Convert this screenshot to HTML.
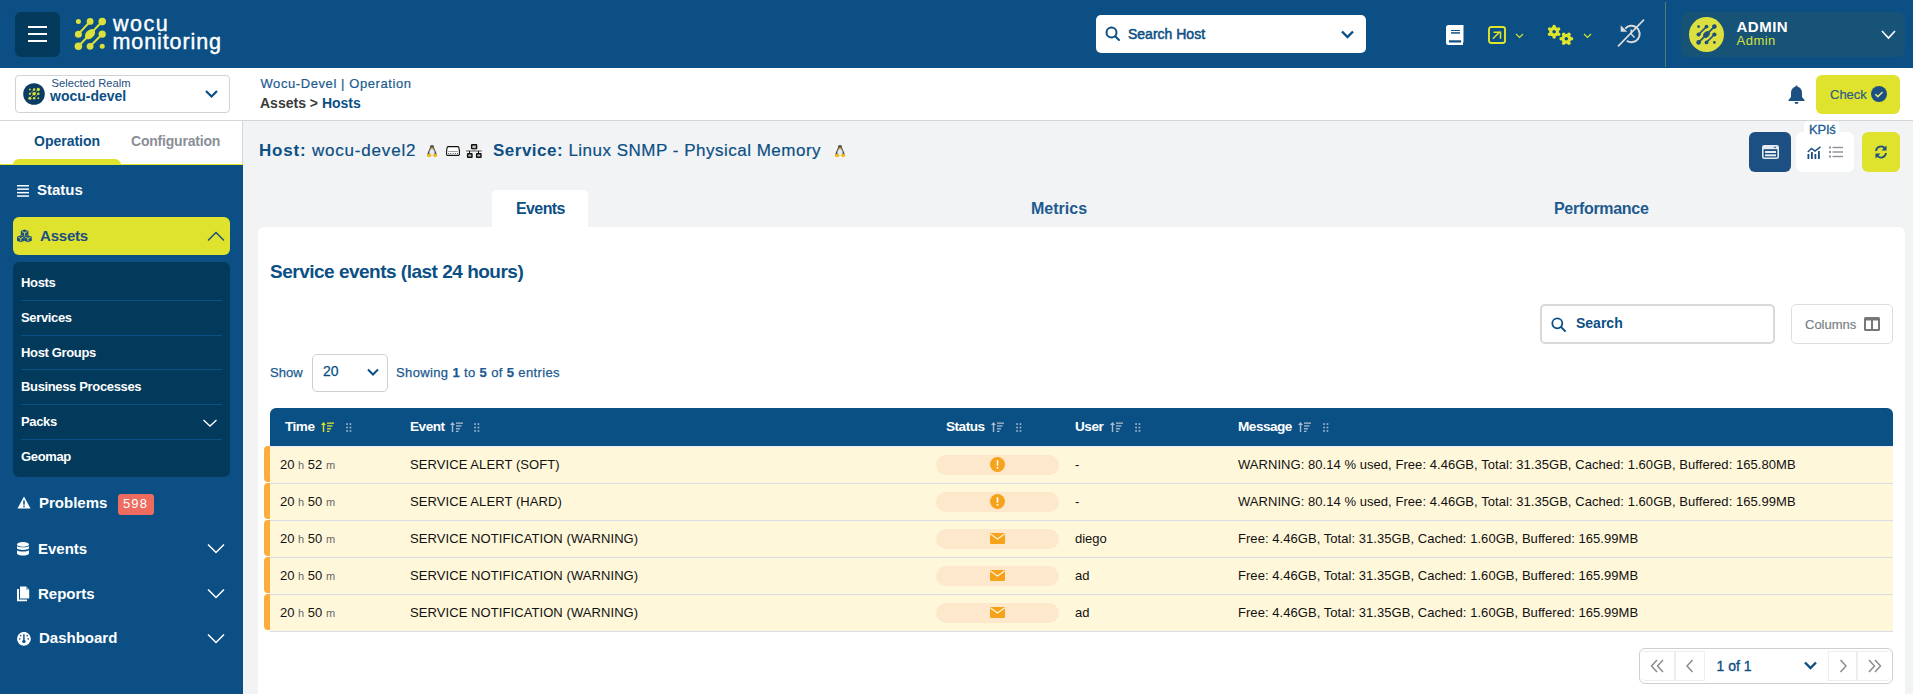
<!DOCTYPE html>
<html><head><meta charset="utf-8">
<style>
*{box-sizing:border-box;margin:0;padding:0}
html,body{width:1913px;height:694px;overflow:hidden;background:#f2f3f5;font-family:"Liberation Sans",sans-serif}
.a{position:absolute}
.t{position:absolute;white-space:nowrap;line-height:1}
.b{font-weight:bold}
svg{display:block}
</style></head><body>

<!-- HEADER -->
<div class="a" style="left:0;top:0;width:1913px;height:68px;background:#0b4f85"></div>
<div class="a" style="left:15px;top:12px;width:45px;height:45px;background:#033a5c;border-radius:6px"></div>
<div class="a" style="left:28px;top:26px;width:19px;height:2px;background:#fff"></div>
<div class="a" style="left:28px;top:33px;width:19px;height:2px;background:#fff"></div>
<div class="a" style="left:28px;top:40px;width:19px;height:2px;background:#fff"></div>
<svg class="a" style="left:0;top:0" width="120" height="68" viewBox="0 0 120 68">
 <g stroke="#dbe03a" stroke-width="2" fill="none" stroke-linecap="round">
  <line x1="90" y1="21.5" x2="78.4" y2="34.2"/>
  <line x1="102.2" y1="21.5" x2="78.4" y2="46.3"/>
  <line x1="102.2" y1="34.2" x2="90" y2="46.3"/>
 </g>
 <g fill="#dbe03a">
  <circle cx="78.4" cy="21.6" r="2.5"/>
  <circle cx="90.1" cy="21.4" r="3.4"/>
  <circle cx="102.2" cy="21.6" r="3.8"/>
  <circle cx="78.4" cy="34.2" r="3.5"/>
  <ellipse cx="90" cy="34.2" rx="6" ry="4" transform="rotate(-45 90 34.2)"/>
  <circle cx="102.2" cy="34.2" r="3.6"/>
  <circle cx="78.4" cy="46.3" r="3.8"/>
  <circle cx="90.1" cy="46.3" r="3.4"/>
  <circle cx="102.2" cy="46.3" r="2.5"/>
 </g>
</svg>
<div class="t" style="left:113px;top:13.8px;font-size:21.5px;color:#fff;letter-spacing:1.5px;-webkit-text-stroke:0.4px #fff">wocu</div>
<div class="t" style="left:112.5px;top:31.8px;font-size:21.5px;color:#fff;letter-spacing:0.9px;-webkit-text-stroke:0.4px #fff">monitoring</div>

<!-- search host -->
<div class="a" style="left:1096px;top:15px;width:270px;height:38px;background:#fff;border-radius:5px"></div>
<svg class="a" style="left:1105px;top:26px" width="16" height="16" viewBox="0 0 16 16"><circle cx="6.5" cy="6.5" r="5" stroke="#0b4f85" stroke-width="2" fill="none"/><line x1="10.2" y1="10.2" x2="14" y2="14" stroke="#0b4f85" stroke-width="2" stroke-linecap="round"/></svg>
<div class="t" style="left:1128px;top:26.5px;font-size:14px;color:#0b4f85;-webkit-text-stroke:0.5px #0b4f85">Search Host</div>
<svg class="a" style="left:1340px;top:29px" width="15" height="11" viewBox="0 0 15 11"><polyline points="2,2.5 7.5,8 13,2.5" stroke="#0b4f85" stroke-width="2.4" fill="none"/></svg>

<!-- header icons -->
<svg class="a" style="left:1446px;top:25px" width="18" height="20" viewBox="0 0 18 20"><path d="M2.5,0 H17.5 V20 H2.5 A2.5,2.5 0 0 1 0,17.5 V2.5 A2.5,2.5 0 0 1 2.5,0 Z" fill="#fff"/><rect x="5" y="5" width="9" height="1" fill="#0b4f85"/><rect x="5" y="7" width="9" height="1.8" fill="#3d6f9a"/><rect x="3" y="15.3" width="12" height="2.2" fill="#0b4f85"/><rect x="17" y="17.5" width="1" height="2.5" fill="#0b4f85"/></svg>
<svg class="a" style="left:1488px;top:26px" width="18" height="18" viewBox="0 0 18 18"><rect x="1" y="1" width="16" height="16" rx="2.2" stroke="#dfe62a" stroke-width="1.9" fill="none"/><path d="M4.8,12.8 L12.2,5.5 M5.5,6.2 H12.5 V12.8" stroke="#dfe62a" stroke-width="1.5" fill="none"/></svg>
<svg class="a" style="left:1515px;top:33px" width="9" height="6" viewBox="0 0 9 6"><polyline points="1,1 4.5,4.5 8,1" stroke="#dfe62a" stroke-width="1.1" fill="none"/></svg>
<svg class="a" style="left:1546px;top:23px" width="30" height="25" viewBox="0 0 30 25" fill="#dfe62a"><circle cx="8.1" cy="8.7" r="4.9"/><circle cx="8.10" cy="3.50" r="1.75"/><circle cx="12.60" cy="6.10" r="1.75"/><circle cx="12.60" cy="11.30" r="1.75"/><circle cx="8.10" cy="13.90" r="1.75"/><circle cx="3.60" cy="11.30" r="1.75"/><circle cx="3.60" cy="6.10" r="1.75"/><circle cx="8.1" cy="8.7" r="1.8" fill="#0b4f85"/><circle cx="20.3" cy="15.8" r="4.9"/><circle cx="22.90" cy="11.30" r="1.75"/><circle cx="25.50" cy="15.80" r="1.75"/><circle cx="22.90" cy="20.30" r="1.75"/><circle cx="17.70" cy="20.30" r="1.75"/><circle cx="15.10" cy="15.80" r="1.75"/><circle cx="17.70" cy="11.30" r="1.75"/><circle cx="20.3" cy="15.8" r="1.8" fill="#0b4f85"/></svg>
<svg class="a" style="left:1583px;top:33px" width="9" height="6" viewBox="0 0 9 6"><polyline points="1,1 4.5,4.5 8,1" stroke="#dfe62a" stroke-width="1.1" fill="none"/></svg>
<svg class="a" style="left:1617px;top:19px" width="28" height="28" viewBox="0 0 28 28"><path d="M8.2,9.7 A8.2,8.2 0 1 1 9.8,21.7" stroke="#dedcdb" stroke-width="2" fill="none"/><path d="M3.7,6.2 L3.7,12.7 L10.2,12.7 Z" fill="#dedcdb"/><path d="M14.2,10.4 V15 L17.5,18.5" stroke="#dedcdb" stroke-width="1.5" fill="none"/><line x1="1" y1="27.4" x2="27" y2="0.6" stroke="#dedcdb" stroke-width="1.6"/></svg>
<div class="a" style="left:1665px;top:2px;width:1px;height:65px;background:#528070"></div>

<!-- user -->
<div class="a" style="left:1681px;top:12px;width:224px;height:45px;background:#175277;border-radius:7px"></div>
<svg class="a" style="left:1689px;top:17px" width="35" height="35" viewBox="0 0 35 35">
 <circle cx="17.5" cy="17.5" r="17.5" fill="#dbe040"/>
 <g stroke="#1f4f7a" stroke-width="1.6" fill="none"><line x1="17.5" y1="9.6" x2="9.6" y2="17.5"/><line x1="25.4" y1="9.6" x2="9.6" y2="25.4"/><line x1="25.4" y1="17.5" x2="17.5" y2="25.4"/></g>
 <g fill="#1f4f7a"><circle cx="9.6" cy="9.6" r="1.4"/><circle cx="17.5" cy="9.6" r="1.9"/><circle cx="25.4" cy="9.6" r="2.3"/><circle cx="9.6" cy="17.5" r="2.1"/><ellipse cx="17.5" cy="17.5" rx="3.8" ry="2.7" transform="rotate(-45 17.5 17.5)"/><circle cx="25.4" cy="17.5" r="2.1"/><circle cx="9.6" cy="25.4" r="2.3"/><circle cx="17.5" cy="25.4" r="1.9"/><circle cx="25.4" cy="25.4" r="1.4"/></g>
</svg>
<div class="t b" style="left:1736.5px;top:18.5px;font-size:15px;letter-spacing:0.5px;color:#fff">ADMIN</div>
<div class="t" style="left:1736.5px;top:34px;font-size:13px;letter-spacing:0.5px;color:#d2e03c">Admin</div>
<svg class="a" style="left:1880px;top:29px" width="17" height="12" viewBox="0 0 17 12"><polyline points="2,2 8.5,9 15,2" stroke="#fff" stroke-width="1.6" fill="none"/></svg>

<!-- SECOND BAR -->
<div class="a" style="left:0;top:68px;width:1913px;height:53px;background:#fff;border-bottom:1px solid #d6d6d6"></div>

<!-- realm -->
<div class="a" style="left:15px;top:75px;width:215px;height:38px;background:#fff;border:1px solid #cfd3d8;border-radius:4px"></div>
<svg class="a" style="left:23px;top:83px" width="22" height="22" viewBox="0 0 22 22"><circle cx="11" cy="11" r="10.8" fill="#0b3d63"/><g stroke="#b9c83c" stroke-width="0.6"><line x1="11.1" y1="6.4" x2="6.9" y2="10.8"/><line x1="15.3" y1="6.4" x2="6.9" y2="15.2"/><line x1="15.3" y1="10.8" x2="11.1" y2="15.2"/></g><g fill="#d9e23a"><circle cx="6.9" cy="6.4" r="0.9"/><circle cx="11.1" cy="6.4" r="1.25"/><circle cx="15.3" cy="6.4" r="1.55"/><circle cx="6.9" cy="10.8" r="1.15"/><circle cx="11.1" cy="10.8" r="1.8"/><circle cx="15.3" cy="10.8" r="1.25"/><circle cx="6.9" cy="15.2" r="1.55"/><circle cx="11.1" cy="15.2" r="1.25"/><circle cx="15.3" cy="15.2" r="0.9"/></g></svg>
<div class="t" style="left:51.5px;top:77.5px;font-size:11.2px;color:#1c4f80">Selected Realm</div>
<div class="t b" style="left:50px;top:88.5px;font-size:14px;color:#0b4f85">wocu-devel</div>
<svg class="a" style="left:204px;top:88px" width="15" height="12" viewBox="0 0 15 12"><polyline points="2,3 7.5,8.5 13,3" stroke="#0b4f85" stroke-width="2.2" fill="none"/></svg>

<div class="t" style="left:260.5px;top:77px;font-size:13px;letter-spacing:0.58px;color:#1c5a8f;-webkit-text-stroke:0.2px #1c5a8f">Wocu-Devel | Operation</div>
<div class="t b" style="left:260px;top:96.3px;font-size:14px;color:#3a3a3a">Assets &gt; <span style="color:#0b4f85">Hosts</span></div>

<svg class="a" style="left:1788px;top:85px" width="17" height="19" viewBox="0 0 17 19"><path d="M8.5,0.5 C9.3,0.5 9.6,1.2 9.6,1.8 C12.5,2.5 14,5 14,8 V12 L16.5,15 V16 H0.5 V15 L3,12 V8 C3,5 4.5,2.5 7.4,1.8 C7.4,1.2 7.7,0.5 8.5,0.5 Z M6.5,17 H10.5 A2,2 0 0 1 6.5,17 Z" fill="#1c4f82"/></svg>
<div class="a" style="left:1816px;top:75px;width:84px;height:39px;background:#dfe32e;border-radius:6px"></div>
<div class="t" style="left:1830px;top:87.5px;font-size:13px;color:#2f5c84;-webkit-text-stroke:0.2px #2f5c84">Check</div>
<svg class="a" style="left:1871px;top:86px" width="16" height="16" viewBox="0 0 16 16"><circle cx="8" cy="8" r="8" fill="#1c4f82"/><polyline points="4.3,8.2 6.9,10.6 11.6,6" stroke="#e3e78a" stroke-width="1.5" fill="none"/></svg>

<!-- SIDEBAR -->
<div class="a" style="left:0;top:121px;width:243px;height:43px;background:#fff"></div>
<div class="a" style="left:242px;top:121px;width:1px;height:43px;background:#d6d6d6"></div>
<div class="t b" style="left:34px;top:133.8px;font-size:14px;color:#0b4f85">Operation</div>
<div class="t b" style="left:131px;top:133.8px;font-size:14px;letter-spacing:-0.2px;color:#8a8f96">Configuration</div>
<div class="a" style="left:0;top:164px;width:243px;height:530px;background:#0b4f85"></div>
<div class="a" style="left:0;top:164px;width:243px;height:1px;background:#e3e824"></div>
<div class="a" style="left:13px;top:159px;width:108px;height:6px;background:#dfe32e;border-radius:6px 6px 0 0"></div>

<svg class="a" style="left:17px;top:185px" width="13" height="12" viewBox="0 0 13 12" fill="#fff"><rect y="0" width="12" height="1.5"/><rect y="3.4" width="12" height="1.5"/><rect y="6.9" width="12" height="1.5"/><rect y="10.3" width="12" height="1.5"/></svg>
<div class="t b" style="left:37px;top:182px;font-size:15px;color:#fff">Status</div>

<div class="a" style="left:13px;top:217px;width:217px;height:38px;background:#dfe32e;border-radius:6px"></div>
<svg class="a" style="left:17px;top:229px" width="15" height="14" viewBox="0 0 15 14"><path d="M7.6,0.5 L11.399999999999999,2.1 L11.399999999999999,6.0 L7.6,7.6 L3.8,6.0 L3.8,2.1 Z" fill="#1c4f82"/><path d="M5.0,2.6 L7.6,3.7 L10.2,2.6 M7.6,3.7 V6.7" stroke="#dfe32e" stroke-width="0.9" fill="none"/><path d="M3.8,6.2 L7.6,7.800000000000001 L7.6,11.7 L3.8,13.3 L0,11.7 L0,7.800000000000001 Z" fill="#1c4f82"/><path d="M1.2,8.3 L3.8,9.4 L6.4,8.3 M3.8,9.4 V12.4" stroke="#dfe32e" stroke-width="0.9" fill="none"/><path d="M11.0,6.2 L14.8,7.800000000000001 L14.8,11.7 L11.0,13.3 L7.2,11.7 L7.2,7.800000000000001 Z" fill="#1c4f82"/><path d="M8.4,8.3 L11.0,9.4 L13.600000000000001,8.3 M11.0,9.4 V12.4" stroke="#dfe32e" stroke-width="0.9" fill="none"/></svg>
<div class="t b" style="left:40px;top:227.5px;font-size:15px;letter-spacing:-0.2px;color:#1c4f82">Assets</div>
<svg class="a" style="left:206px;top:230px" width="20" height="12" viewBox="0 0 20 12"><polyline points="2,10.5 10,2.5 18,10.5" stroke="#1c4f82" stroke-width="1.5" fill="none"/></svg>

<div class="a" style="left:13px;top:262px;width:217px;height:215px;background:#033a5c;border-radius:6px"></div>
<div class="a" style="left:21px;top:300px;width:201px;height:1px;background:#0d5088"></div>
<div class="a" style="left:21px;top:335px;width:201px;height:1px;background:#0d5088"></div>
<div class="a" style="left:21px;top:369px;width:201px;height:1px;background:#0d5088"></div>
<div class="a" style="left:21px;top:404px;width:201px;height:1px;background:#0d5088"></div>
<div class="a" style="left:21px;top:439px;width:201px;height:1px;background:#0d5088"></div>
<div class="t b" style="left:21px;top:276.1px;font-size:13px;letter-spacing:-0.35px;color:#fff">Hosts</div>
<div class="t b" style="left:21px;top:311.1px;font-size:13px;letter-spacing:-0.35px;color:#fff">Services</div>
<div class="t b" style="left:21px;top:346.1px;font-size:13px;letter-spacing:-0.35px;color:#fff">Host Groups</div>
<div class="t b" style="left:21px;top:380.1px;font-size:13px;letter-spacing:-0.35px;color:#fff">Business Processes</div>
<div class="t b" style="left:21px;top:415.1px;font-size:13px;letter-spacing:-0.35px;color:#fff">Packs</div>
<svg class="a" style="left:202px;top:418px" width="16" height="10" viewBox="0 0 16 10"><polyline points="1.5,2 8,8 14.5,2" stroke="#fff" stroke-width="1.3" fill="none"/></svg>
<div class="t b" style="left:21px;top:450.1px;font-size:13px;letter-spacing:-0.35px;color:#fff">Geomap</div>

<svg class="a" style="left:17px;top:496px" width="14" height="13" viewBox="0 0 14 13"><path d="M7,0.5 L13.5,12.5 H0.5 Z" fill="#fff"/><rect x="6.2" y="4.5" width="1.6" height="4.2" fill="#0b4f85"/><rect x="6.2" y="9.6" width="1.6" height="1.6" fill="#0b4f85"/></svg>
<div class="t b" style="left:39px;top:495px;font-size:15px;color:#fff">Problems</div>
<div class="a" style="left:118px;top:494px;width:36px;height:21px;background:#ee6b5f;border-radius:3px"></div>
<div class="t" style="left:123px;top:497.3px;font-size:13px;letter-spacing:1.1px;color:#fff">598</div>

<svg class="a" style="left:17px;top:542px" width="12" height="14" viewBox="0 0 12 14" fill="#fff"><ellipse cx="6" cy="2.4" rx="6" ry="2.4"/><path d="M0,3.9 C1,5.6 11,5.6 12,3.9 V6.6 C11,8.4 1,8.4 0,6.6 Z"/><path d="M0,8.2 C1,10 11,10 12,8.2 V11.5 C11,14.2 1,14.2 0,11.5 Z"/></svg>
<div class="t b" style="left:38px;top:540.5px;font-size:15px;color:#fff">Events</div>
<svg class="a" style="left:206px;top:543px" width="20" height="12" viewBox="0 0 20 12"><polyline points="2,1.5 10,9.5 18,1.5" stroke="#fff" stroke-width="1.5" fill="none"/></svg>

<svg class="a" style="left:17px;top:586px" width="13" height="16" viewBox="0 0 13 16" fill="#fff"><path d="M3,0.5 H9 L12.2,3.7 V12.5 H3 Z"/><path d="M9,0.5 V3.7 H12.2 Z" fill="#8fb0cc"/><path d="M0,3 H2 V13.5 H10 V15.2 H0 Z"/></svg>
<div class="t b" style="left:38px;top:585.5px;font-size:15px;color:#fff">Reports</div>
<svg class="a" style="left:206px;top:588px" width="20" height="12" viewBox="0 0 20 12"><polyline points="2,1.5 10,9.5 18,1.5" stroke="#fff" stroke-width="1.5" fill="none"/></svg>

<svg class="a" style="left:17px;top:632px" width="14" height="14" viewBox="0 0 14 14"><circle cx="6.9" cy="6.8" r="6.9" fill="#fff"/><g fill="#0b4f85"><rect x="6.2" y="2.2" width="1.4" height="6.5"/><circle cx="6.9" cy="9.4" r="1.7"/><rect x="2.9" y="2.9" width="1.4" height="1.4"/><rect x="9.5" y="2.9" width="1.4" height="1.4"/><rect x="1.9" y="6.2" width="1.4" height="1.4"/><rect x="10.5" y="6.2" width="1.4" height="1.4"/></g></svg>
<div class="t b" style="left:39px;top:630.2px;font-size:15px;color:#fff">Dashboard</div>
<svg class="a" style="left:206px;top:633px" width="20" height="12" viewBox="0 0 20 12"><polyline points="2,1.5 10,9.5 18,1.5" stroke="#fff" stroke-width="1.5" fill="none"/></svg>

<!-- CONTENT -->
<div class="t b" style="left:259px;top:141.5px;font-size:17px;letter-spacing:0.8px;color:#0b4f85">Host: <span style="font-weight:normal;-webkit-text-stroke:0.2px #0b4f85">wocu-devel2</span></div>
<svg class="a" style="left:426px;top:144px" width="12" height="14" viewBox="0 0 12 14"><path d="M6,1 C7.6,1 8,2.3 8.1,3.5 C8.3,5.5 10.3,7.5 10.5,10 L10.5,12 H1.5 L1.5,10 C1.7,7.5 3.7,5.5 3.9,3.5 C4,2.3 4.4,1 6,1 Z" fill="#4a4f55"/><ellipse cx="6" cy="8.6" rx="2.6" ry="3.7" fill="#e6eaee"/><ellipse cx="6" cy="4.4" rx="1.5" ry="0.8" fill="#f5b800"/><ellipse cx="3.2" cy="11.4" rx="2.1" ry="1.7" fill="#f5b800"/><ellipse cx="9.2" cy="11.4" rx="1.9" ry="1.7" fill="#f5b800"/></svg>
<svg class="a" style="left:446px;top:146px" width="14" height="10" viewBox="0 0 14 10"><path d="M2.3,0.6 H11.7 C12.4,0.6 12.7,1 12.9,1.6 L13.4,4.8 V8.6 C13.4,9.1 13,9.4 12.5,9.4 H1.5 C1,9.4 0.6,9.1 0.6,8.6 V4.8 L1.1,1.6 C1.3,1 1.6,0.6 2.3,0.6 Z" stroke="#111" stroke-width="1.1" fill="#fff"/><rect x="2.2" y="5" width="9.6" height="0.8" fill="#888"/><g fill="#222"><circle cx="2.7" cy="7.5" r="0.5"/><circle cx="4.7" cy="7.5" r="0.5"/><circle cx="9.4" cy="7.5" r="0.5"/><circle cx="11.4" cy="7.5" r="0.5"/></g><rect x="5.7" y="7.2" width="2.6" height="0.6" fill="#888"/></svg>
<svg class="a" style="left:466px;top:144px" width="16" height="14" viewBox="0 0 16 14"><rect x="5.6" y="0.8" width="5" height="3.8" rx="0.4" stroke="#111" stroke-width="1.4" fill="#bbb"/><rect x="0" y="6.2" width="15.8" height="1.5" fill="#8a8a8a"/><rect x="7.6" y="4.6" width="1" height="1.8" fill="#8a8a8a"/><rect x="3" y="7" width="1" height="2.4" fill="#111"/><rect x="12" y="7" width="1" height="2.4" fill="#111"/><rect x="1.6" y="9.7" width="4.4" height="3.6" rx="0.4" stroke="#111" stroke-width="1.4" fill="#bbb"/><rect x="10.6" y="9.7" width="4.4" height="3.6" rx="0.4" stroke="#111" stroke-width="1.4" fill="#bbb"/></svg>
<div class="t b" style="left:493px;top:141.5px;font-size:17px;letter-spacing:0.5px;color:#0b4f85">Service: <span style="font-weight:normal;-webkit-text-stroke:0.2px #0b4f85">Linux SNMP - Physical Memory</span></div>
<svg class="a" style="left:834px;top:144px" width="12" height="14" viewBox="0 0 12 14"><path d="M6,1 C7.6,1 8,2.3 8.1,3.5 C8.3,5.5 10.3,7.5 10.5,10 L10.5,12 H1.5 L1.5,10 C1.7,7.5 3.7,5.5 3.9,3.5 C4,2.3 4.4,1 6,1 Z" fill="#4a4f55"/><ellipse cx="6" cy="8.6" rx="2.6" ry="3.7" fill="#e6eaee"/><ellipse cx="6" cy="4.4" rx="1.5" ry="0.8" fill="#f5b800"/><ellipse cx="3.2" cy="11.4" rx="2.1" ry="1.7" fill="#f5b800"/><ellipse cx="9.2" cy="11.4" rx="1.9" ry="1.7" fill="#f5b800"/></svg>

<!-- right buttons -->
<div class="a" style="left:1749px;top:132px;width:42px;height:40px;background:#1c4f82;border-radius:6px"></div>
<svg class="a" style="left:1762px;top:145px" width="17" height="14" viewBox="0 0 17 14"><rect x="0.8" y="0.8" width="15.4" height="12.4" rx="1.5" fill="none" stroke="#e6ebf0" stroke-width="1.6"/><rect x="1" y="1" width="15" height="3.2" fill="#e6ebf0"/><path d="M11.5,1.8 H14.5 L13,3.3 Z" fill="#1c4f82"/><rect x="3" y="6" width="11" height="2" fill="#e6ebf0"/><rect x="3" y="9.3" width="11" height="2" fill="#e6ebf0"/></svg>
<div class="a" style="left:1796px;top:132px;width:58px;height:40px;background:#fff;border-radius:6px"></div>
<div class="a" style="left:1804px;top:121px;width:35px;height:14px;background:#fff;border-radius:5px 5px 0 0"></div>
<div class="t" style="left:1809px;top:123.3px;font-size:13px;letter-spacing:-0.2px;color:#1c5a8f;-webkit-text-stroke:0.3px #1c5a8f">KPI&#347;</div>
<svg class="a" style="left:1807px;top:146px" width="15" height="13" viewBox="0 0 15 13"><polyline points="0.8,6 4.5,2.5 8,5 13.5,0.8" fill="none" stroke="#1c4f82" stroke-width="1.5"/><g fill="#1c4f82"><rect x="0.5" y="8" width="1.8" height="5"/><rect x="4" y="6" width="1.8" height="7"/><rect x="7.5" y="8" width="1.8" height="5"/><rect x="11" y="5" width="1.8" height="8"/></g></svg>
<svg class="a" style="left:1829px;top:146px" width="14" height="12" viewBox="0 0 14 12" fill="#8a8f96"><rect x="0" y="0.5" width="2" height="2"/><rect x="3.5" y="0.8" width="10.5" height="1.4"/><rect x="0" y="5" width="2" height="2"/><rect x="3.5" y="5.3" width="10.5" height="1.4"/><rect x="0" y="9.5" width="2" height="2"/><rect x="3.5" y="9.8" width="10.5" height="1.4"/></svg>
<div class="a" style="left:1862px;top:132px;width:38px;height:40px;background:#dfe32e;border-radius:6px"></div>
<svg class="a" style="left:1874px;top:145px" width="14" height="14" viewBox="0 0 14 14"><path d="M2,6 A5,5 0 0 1 11,3.5" fill="none" stroke="#1c4f82" stroke-width="1.8"/><path d="M12,8 A5,5 0 0 1 3,10.5" fill="none" stroke="#1c4f82" stroke-width="1.8"/><path d="M12.5,0.5 V5.5 H7.5 Z" fill="#1c4f82"/><path d="M1.5,13.5 V8.5 H6.5 Z" fill="#1c4f82"/></svg>

<!-- tabs -->
<div class="a" style="left:492px;top:190px;width:96px;height:40px;background:#fff;border-radius:5px 5px 0 0"></div>
<div class="t b" style="left:516px;top:200.5px;font-size:16px;letter-spacing:-0.6px;color:#0b4f85">Events</div>
<div class="t b" style="left:1031px;top:200.5px;font-size:16px;color:#1c5a8f">Metrics</div>
<div class="t b" style="left:1554px;top:200.5px;font-size:16px;letter-spacing:-0.3px;color:#1c5a8f">Performance</div>

<!-- card -->
<div class="a" style="left:258px;top:227px;width:1647px;height:480px;background:#fff;border-radius:6px"></div>
<div class="t b" style="left:270px;top:261.5px;font-size:19px;letter-spacing:-0.5px;color:#0b4f85">Service events (last 24 hours)</div>

<div class="a" style="left:1540px;top:304px;width:235px;height:40px;background:#fff;border:2px solid #d9d9d9;border-radius:5px"></div>
<svg class="a" style="left:1551px;top:317px" width="16" height="15" viewBox="0 0 16 15"><circle cx="6.3" cy="6.3" r="5" stroke="#0b4f85" stroke-width="1.8" fill="none"/><line x1="10" y1="10" x2="14" y2="14" stroke="#0b4f85" stroke-width="1.8" stroke-linecap="round"/></svg>
<div class="t b" style="left:1576px;top:316.2px;font-size:14px;color:#0b4f85">Search</div>
<div class="a" style="left:1791px;top:304px;width:102px;height:40px;background:#fff;border:1px solid #dedede;border-radius:5px"></div>
<div class="t" style="left:1805px;top:317.7px;font-size:13px;color:#7b7f85;-webkit-text-stroke:0.2px #7b7f85">Columns</div>
<svg class="a" style="left:1864px;top:317px" width="16" height="14" viewBox="0 0 16 14"><rect x="0" y="0" width="16" height="14" rx="1.5" fill="#777"/><rect x="2" y="3.5" width="5" height="8.5" fill="#fff"/><rect x="9" y="3.5" width="5" height="8.5" fill="#fff"/></svg>

<div class="t" style="left:270px;top:366px;font-size:13px;color:#1c5a8f;-webkit-text-stroke:0.25px #1c5a8f">Show</div>
<div class="a" style="left:312px;top:354px;width:76px;height:38px;background:#fff;border:1px solid #cfcfcf;border-radius:5px"></div>
<div class="t" style="left:323px;top:364px;font-size:14px;color:#0b4f85;-webkit-text-stroke:0.25px #0b4f85">20</div>
<svg class="a" style="left:366px;top:367px" width="14" height="10" viewBox="0 0 14 10"><polyline points="2,2.5 7,7.5 12,2.5" stroke="#0b4f85" stroke-width="2" fill="none"/></svg>
<div class="t" style="left:396px;top:366px;font-size:13px;letter-spacing:0.37px;color:#1c5a8f;-webkit-text-stroke:0.25px #1c5a8f">Showing <b>1</b> to <b>5</b> of <b>5</b> entries</div>
<!-- TABLE -->
<div class="a" style="left:270px;top:408px;width:1623px;height:38px;background:#0a5085;border-radius:6px 6px 0 0"></div>
<div class="a" style="left:270px;top:446px;width:1623px;height:1px;background:#eceff6"></div>
<div class="t b" style="left:285px;top:419.6px;font-size:13.6px;letter-spacing:-0.5px;color:#fff">Time</div>
<svg class="a" style="left:321px;top:422px" width="13" height="10" viewBox="0 0 13 10"><g fill="#dfe32e"><path d="M2.5,0 L5,3 H3.2 V10 H1.8 V3 H0 Z"/><rect x="6" y="0.5" width="7" height="1.3"/><rect x="6" y="3.3" width="5.5" height="1.3"/><rect x="6" y="6.1" width="4" height="1.3"/><rect x="6" y="8.7" width="2.5" height="1.3"/></g></svg>
<svg class="a" style="left:346px;top:423px" width="6" height="10" viewBox="0 0 6 10"><g fill="#9fb5cb"><rect x="0.2" y="0.2" width="1.7" height="1.7"/><rect x="3.6" y="0.2" width="1.7" height="1.7"/><rect x="0.2" y="3.7" width="1.7" height="1.7"/><rect x="3.6" y="3.7" width="1.7" height="1.7"/><rect x="0.2" y="7.1" width="1.7" height="1.7"/><rect x="3.6" y="7.1" width="1.7" height="1.7"/></g></svg>
<div class="t b" style="left:410px;top:419.6px;font-size:13.6px;letter-spacing:-0.5px;color:#fff">Event</div>
<svg class="a" style="left:450px;top:422px" width="13" height="10" viewBox="0 0 13 10"><g fill="#a9bccd"><path d="M2.5,0 L5,3 H3.2 V10 H1.8 V3 H0 Z"/><rect x="6" y="0.5" width="7" height="1.3"/><rect x="6" y="3.3" width="5.5" height="1.3"/><rect x="6" y="6.1" width="4" height="1.3"/><rect x="6" y="8.7" width="2.5" height="1.3"/></g></svg>
<svg class="a" style="left:474px;top:423px" width="6" height="10" viewBox="0 0 6 10"><g fill="#9fb5cb"><rect x="0.2" y="0.2" width="1.7" height="1.7"/><rect x="3.6" y="0.2" width="1.7" height="1.7"/><rect x="0.2" y="3.7" width="1.7" height="1.7"/><rect x="3.6" y="3.7" width="1.7" height="1.7"/><rect x="0.2" y="7.1" width="1.7" height="1.7"/><rect x="3.6" y="7.1" width="1.7" height="1.7"/></g></svg>
<div class="t b" style="left:946px;top:419.6px;font-size:13.6px;letter-spacing:-0.5px;color:#fff">Status</div>
<svg class="a" style="left:991px;top:422px" width="13" height="10" viewBox="0 0 13 10"><g fill="#a9bccd"><path d="M2.5,0 L5,3 H3.2 V10 H1.8 V3 H0 Z"/><rect x="6" y="0.5" width="7" height="1.3"/><rect x="6" y="3.3" width="5.5" height="1.3"/><rect x="6" y="6.1" width="4" height="1.3"/><rect x="6" y="8.7" width="2.5" height="1.3"/></g></svg>
<svg class="a" style="left:1016px;top:423px" width="6" height="10" viewBox="0 0 6 10"><g fill="#9fb5cb"><rect x="0.2" y="0.2" width="1.7" height="1.7"/><rect x="3.6" y="0.2" width="1.7" height="1.7"/><rect x="0.2" y="3.7" width="1.7" height="1.7"/><rect x="3.6" y="3.7" width="1.7" height="1.7"/><rect x="0.2" y="7.1" width="1.7" height="1.7"/><rect x="3.6" y="7.1" width="1.7" height="1.7"/></g></svg>
<div class="t b" style="left:1075px;top:419.6px;font-size:13.6px;letter-spacing:-0.5px;color:#fff">User</div>
<svg class="a" style="left:1110px;top:422px" width="13" height="10" viewBox="0 0 13 10"><g fill="#a9bccd"><path d="M2.5,0 L5,3 H3.2 V10 H1.8 V3 H0 Z"/><rect x="6" y="0.5" width="7" height="1.3"/><rect x="6" y="3.3" width="5.5" height="1.3"/><rect x="6" y="6.1" width="4" height="1.3"/><rect x="6" y="8.7" width="2.5" height="1.3"/></g></svg>
<svg class="a" style="left:1135px;top:423px" width="6" height="10" viewBox="0 0 6 10"><g fill="#9fb5cb"><rect x="0.2" y="0.2" width="1.7" height="1.7"/><rect x="3.6" y="0.2" width="1.7" height="1.7"/><rect x="0.2" y="3.7" width="1.7" height="1.7"/><rect x="3.6" y="3.7" width="1.7" height="1.7"/><rect x="0.2" y="7.1" width="1.7" height="1.7"/><rect x="3.6" y="7.1" width="1.7" height="1.7"/></g></svg>
<div class="t b" style="left:1238px;top:419.6px;font-size:13.6px;letter-spacing:-0.5px;color:#fff">Message</div>
<svg class="a" style="left:1298px;top:422px" width="13" height="10" viewBox="0 0 13 10"><g fill="#a9bccd"><path d="M2.5,0 L5,3 H3.2 V10 H1.8 V3 H0 Z"/><rect x="6" y="0.5" width="7" height="1.3"/><rect x="6" y="3.3" width="5.5" height="1.3"/><rect x="6" y="6.1" width="4" height="1.3"/><rect x="6" y="8.7" width="2.5" height="1.3"/></g></svg>
<svg class="a" style="left:1323px;top:423px" width="6" height="10" viewBox="0 0 6 10"><g fill="#9fb5cb"><rect x="0.2" y="0.2" width="1.7" height="1.7"/><rect x="3.6" y="0.2" width="1.7" height="1.7"/><rect x="0.2" y="3.7" width="1.7" height="1.7"/><rect x="3.6" y="3.7" width="1.7" height="1.7"/><rect x="0.2" y="7.1" width="1.7" height="1.7"/><rect x="3.6" y="7.1" width="1.7" height="1.7"/></g></svg>
<div class="a" style="left:270px;top:447px;width:1623px;height:37px;background:#fff7da;border-bottom:1px solid #d8dce4"></div>
<div class="a" style="left:264px;top:446px;width:6px;height:36px;background:#fdad3c;border-radius:4px 0 0 4px"></div>
<div class="t" style="left:280px;top:458px;font-size:13px;color:#111">20 <span style="font-size:11px;color:#666">h</span> 52 <span style="font-size:11px;color:#666">m</span></div>
<div class="t" style="left:410px;top:458px;font-size:13px;letter-spacing:0.08px;color:#111">SERVICE ALERT (SOFT)</div>
<div class="a" style="left:936px;top:455px;width:123px;height:20px;background:#fde8cb;border-radius:10px"></div>
<svg class="a" style="left:990px;top:457px" width="15" height="15" viewBox="0 0 15 15"><circle cx="7.5" cy="7.5" r="7.5" fill="#f7a21b"/><rect x="6.7" y="3.2" width="1.6" height="5.6" rx="0.5" fill="#fff"/><rect x="6.7" y="10" width="1.6" height="1.6" fill="#fff"/></svg>
<div class="t" style="left:1075px;top:458px;font-size:13px;color:#111">-</div>
<div class="t" style="left:1238px;top:458px;font-size:13px;letter-spacing:0.05px;color:#111">WARNING: 80.14 % used, Free: 4.46GB, Total: 31.35GB, Cached: 1.60GB, Buffered: 165.80MB</div>
<div class="a" style="left:270px;top:484px;width:1623px;height:37px;background:#fff7da;border-bottom:1px solid #d8dce4"></div>
<div class="a" style="left:264px;top:483px;width:6px;height:36px;background:#fdad3c;border-radius:4px 0 0 4px"></div>
<div class="t" style="left:280px;top:495px;font-size:13px;color:#111">20 <span style="font-size:11px;color:#666">h</span> 50 <span style="font-size:11px;color:#666">m</span></div>
<div class="t" style="left:410px;top:495px;font-size:13px;letter-spacing:0.08px;color:#111">SERVICE ALERT (HARD)</div>
<div class="a" style="left:936px;top:492px;width:123px;height:20px;background:#fde8cb;border-radius:10px"></div>
<svg class="a" style="left:990px;top:494px" width="15" height="15" viewBox="0 0 15 15"><circle cx="7.5" cy="7.5" r="7.5" fill="#f7a21b"/><rect x="6.7" y="3.2" width="1.6" height="5.6" rx="0.5" fill="#fff"/><rect x="6.7" y="10" width="1.6" height="1.6" fill="#fff"/></svg>
<div class="t" style="left:1075px;top:495px;font-size:13px;color:#111">-</div>
<div class="t" style="left:1238px;top:495px;font-size:13px;letter-spacing:0.05px;color:#111">WARNING: 80.14 % used, Free: 4.46GB, Total: 31.35GB, Cached: 1.60GB, Buffered: 165.99MB</div>
<div class="a" style="left:270px;top:521px;width:1623px;height:37px;background:#fff7da;border-bottom:1px solid #d8dce4"></div>
<div class="a" style="left:264px;top:520px;width:6px;height:36px;background:#fdad3c;border-radius:4px 0 0 4px"></div>
<div class="t" style="left:280px;top:532px;font-size:13px;color:#111">20 <span style="font-size:11px;color:#666">h</span> 50 <span style="font-size:11px;color:#666">m</span></div>
<div class="t" style="left:410px;top:532px;font-size:13px;letter-spacing:0.08px;color:#111">SERVICE NOTIFICATION (WARNING)</div>
<div class="a" style="left:936px;top:529px;width:123px;height:20px;background:#fde8cb;border-radius:10px"></div>
<svg class="a" style="left:990px;top:533px" width="15" height="11" viewBox="0 0 15 11"><rect x="0" y="0" width="15" height="11" rx="1.3" fill="#f7a21b"/><polyline points="0.5,1 7.5,6 14.5,1" fill="none" stroke="#fef6d8" stroke-width="1.2"/></svg>
<div class="t" style="left:1075px;top:532px;font-size:13px;color:#111">diego</div>
<div class="t" style="left:1238px;top:532px;font-size:13px;letter-spacing:0.05px;color:#111">Free: 4.46GB, Total: 31.35GB, Cached: 1.60GB, Buffered: 165.99MB</div>
<div class="a" style="left:270px;top:558px;width:1623px;height:37px;background:#fff7da;border-bottom:1px solid #d8dce4"></div>
<div class="a" style="left:264px;top:557px;width:6px;height:36px;background:#fdad3c;border-radius:4px 0 0 4px"></div>
<div class="t" style="left:280px;top:569px;font-size:13px;color:#111">20 <span style="font-size:11px;color:#666">h</span> 50 <span style="font-size:11px;color:#666">m</span></div>
<div class="t" style="left:410px;top:569px;font-size:13px;letter-spacing:0.08px;color:#111">SERVICE NOTIFICATION (WARNING)</div>
<div class="a" style="left:936px;top:566px;width:123px;height:20px;background:#fde8cb;border-radius:10px"></div>
<svg class="a" style="left:990px;top:570px" width="15" height="11" viewBox="0 0 15 11"><rect x="0" y="0" width="15" height="11" rx="1.3" fill="#f7a21b"/><polyline points="0.5,1 7.5,6 14.5,1" fill="none" stroke="#fef6d8" stroke-width="1.2"/></svg>
<div class="t" style="left:1075px;top:569px;font-size:13px;color:#111">ad</div>
<div class="t" style="left:1238px;top:569px;font-size:13px;letter-spacing:0.05px;color:#111">Free: 4.46GB, Total: 31.35GB, Cached: 1.60GB, Buffered: 165.99MB</div>
<div class="a" style="left:270px;top:595px;width:1623px;height:37px;background:#fff7da;border-bottom:1px solid #d8dce4"></div>
<div class="a" style="left:264px;top:594px;width:6px;height:36px;background:#fdad3c;border-radius:4px 0 0 4px"></div>
<div class="t" style="left:280px;top:606px;font-size:13px;color:#111">20 <span style="font-size:11px;color:#666">h</span> 50 <span style="font-size:11px;color:#666">m</span></div>
<div class="t" style="left:410px;top:606px;font-size:13px;letter-spacing:0.08px;color:#111">SERVICE NOTIFICATION (WARNING)</div>
<div class="a" style="left:936px;top:603px;width:123px;height:20px;background:#fde8cb;border-radius:10px"></div>
<svg class="a" style="left:990px;top:607px" width="15" height="11" viewBox="0 0 15 11"><rect x="0" y="0" width="15" height="11" rx="1.3" fill="#f7a21b"/><polyline points="0.5,1 7.5,6 14.5,1" fill="none" stroke="#fef6d8" stroke-width="1.2"/></svg>
<div class="t" style="left:1075px;top:606px;font-size:13px;color:#111">ad</div>
<div class="t" style="left:1238px;top:606px;font-size:13px;letter-spacing:0.05px;color:#111">Free: 4.46GB, Total: 31.35GB, Cached: 1.60GB, Buffered: 165.99MB</div>
<div class="a" style="left:1639px;top:648px;width:254px;height:36px;background:#fff;border:1px solid #cfcfcf;border-radius:6px"></div>
<div class="a" style="left:1642px;top:651px;width:33px;height:30px;border:1px solid #eeeeee;border-left:none;border-radius:4px 0 0 4px"></div>
<div class="a" style="left:1675px;top:651px;width:30px;height:30px;border:1px solid #eeeeee"></div>
<div class="a" style="left:1828px;top:651px;width:29px;height:30px;border:1px solid #eeeeee"></div>
<div class="a" style="left:1857px;top:651px;width:33px;height:30px;border:1px solid #eeeeee;border-right:none;border-radius:0 4px 4px 0"></div>
<svg class="a" style="left:1650px;top:659px" width="16" height="14" viewBox="0 0 16 14"><polyline points="7,1 1.5,7 7,13" fill="none" stroke="#888" stroke-width="1.4"/><polyline points="13,1 7.5,7 13,13" fill="none" stroke="#888" stroke-width="1.4"/></svg>
<svg class="a" style="left:1685px;top:659px" width="10" height="14" viewBox="0 0 10 14"><polyline points="7.5,1 2,7 7.5,13" fill="none" stroke="#888" stroke-width="1.4"/></svg>
<div class="t" style="left:1716.5px;top:659px;font-size:14px;color:#0b4f85;-webkit-text-stroke:0.35px #0b4f85">1 of 1</div>
<svg class="a" style="left:1803px;top:660px" width="15" height="11" viewBox="0 0 15 11"><polyline points="2,2.5 7.5,8 13,2.5" stroke="#0b4f85" stroke-width="2.4" fill="none"/></svg>
<svg class="a" style="left:1838px;top:659px" width="10" height="14" viewBox="0 0 10 14"><polyline points="2.5,1 8,7 2.5,13" fill="none" stroke="#888" stroke-width="1.4"/></svg>
<svg class="a" style="left:1866px;top:659px" width="16" height="14" viewBox="0 0 16 14"><polyline points="3,1 8.5,7 3,13" fill="none" stroke="#888" stroke-width="1.4"/><polyline points="9,1 14.5,7 9,13" fill="none" stroke="#888" stroke-width="1.4"/></svg>
</body></html>
